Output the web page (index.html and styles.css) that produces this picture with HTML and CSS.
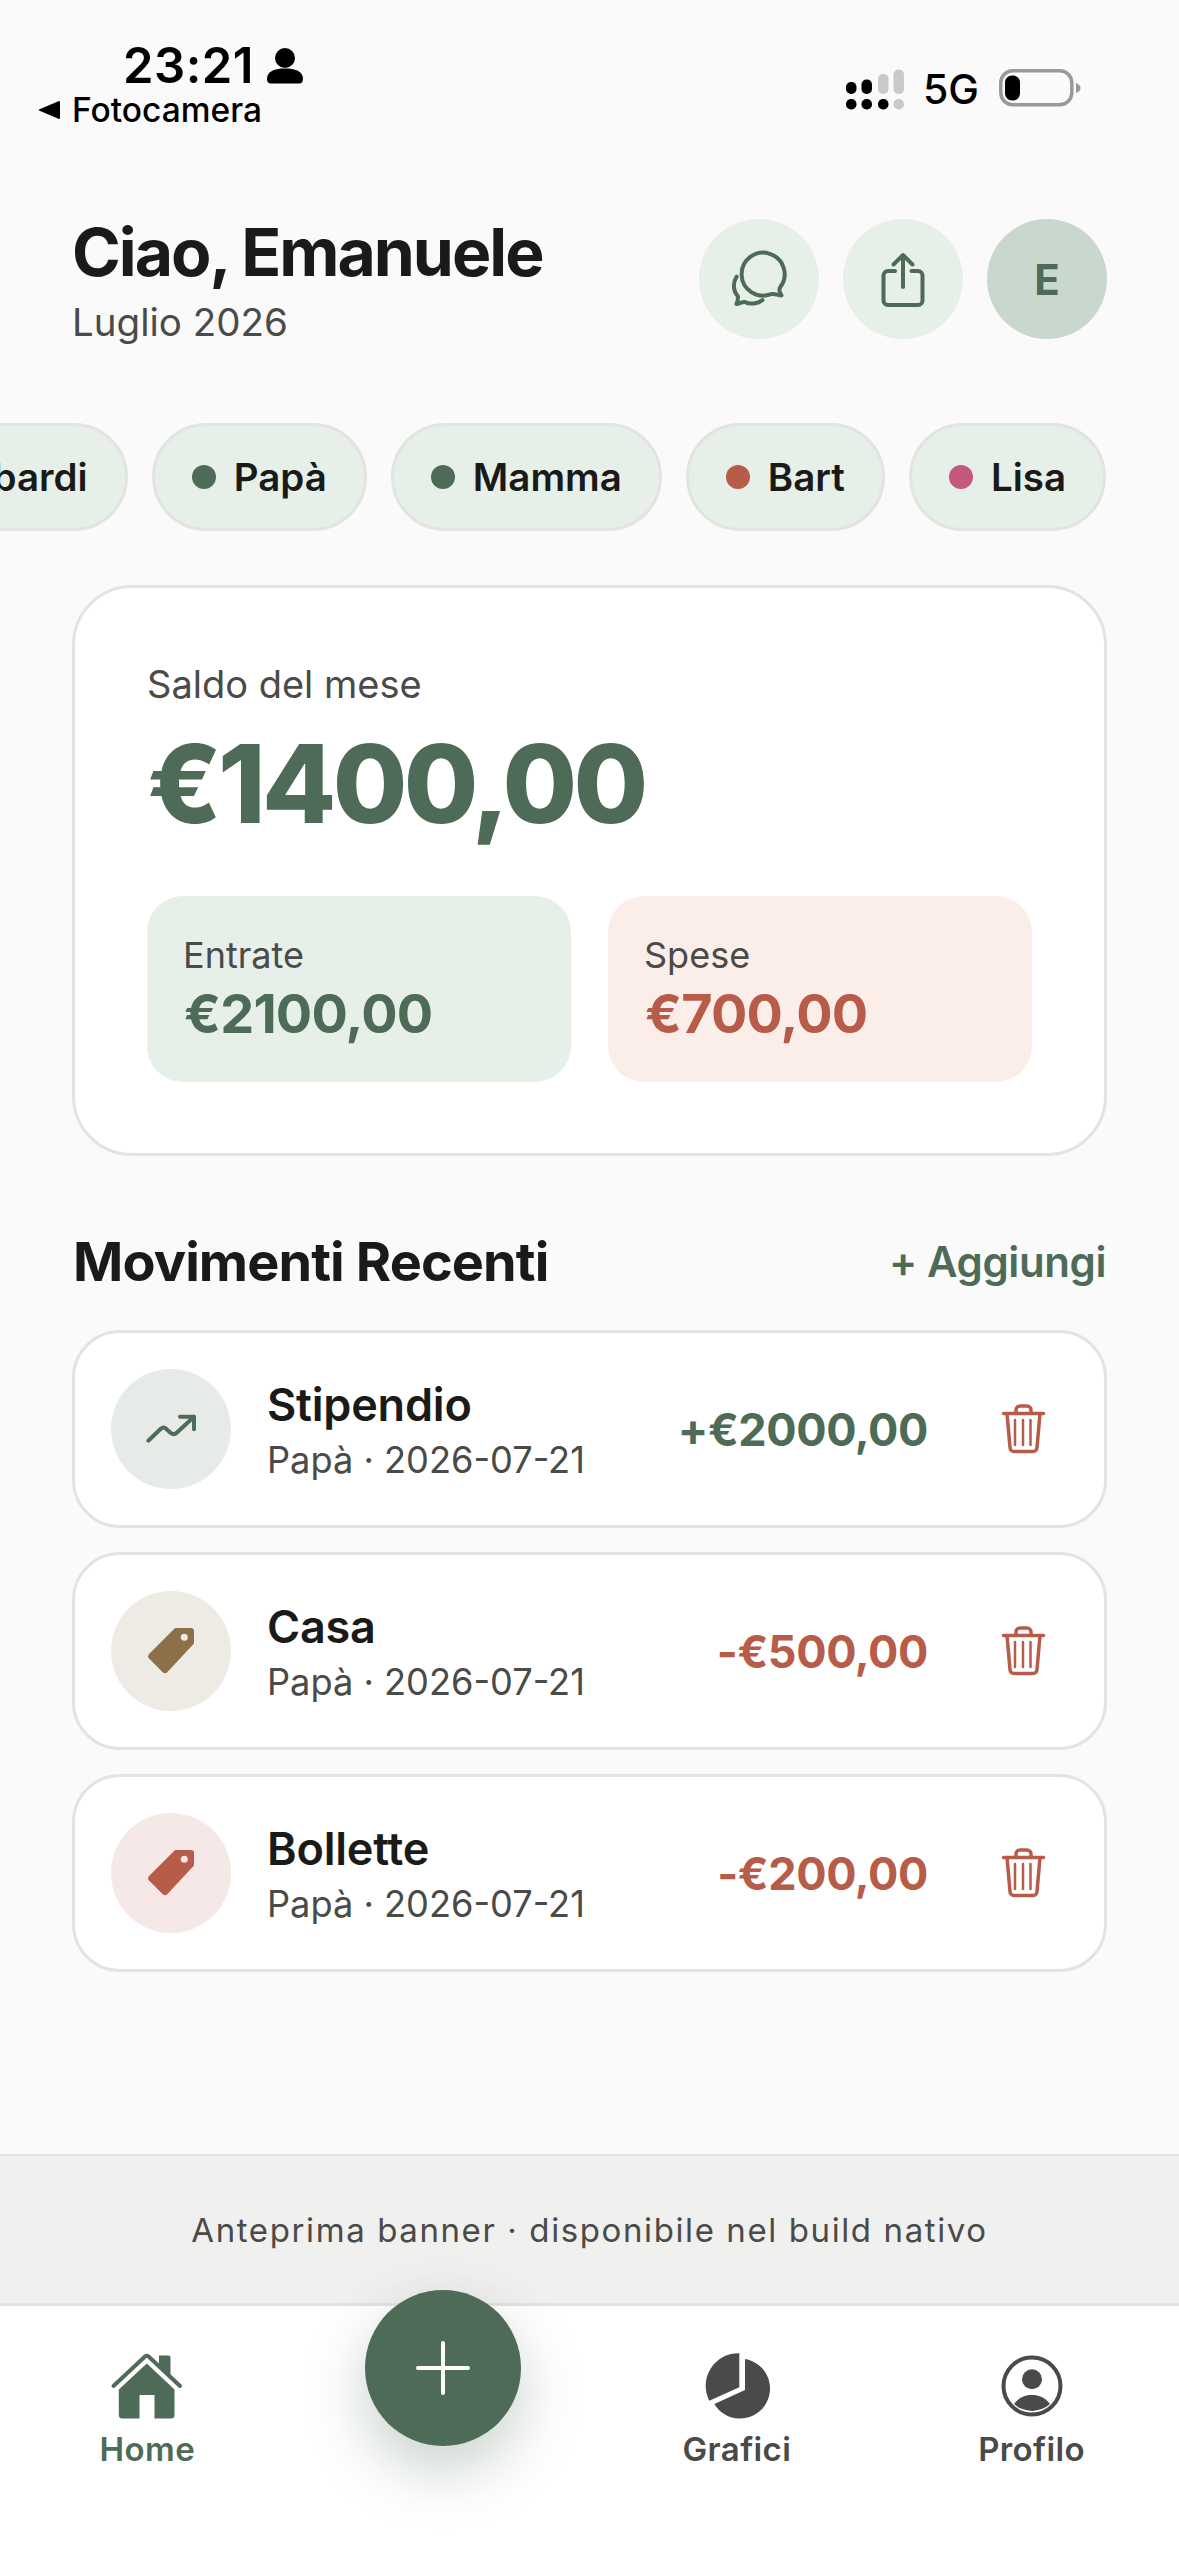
FILE: index.html
```html
<!DOCTYPE html>
<html lang="it">
<head>
<meta charset="utf-8">
<title>Ciao, Emanuele</title>
<link rel="stylesheet" href="styles.css">
</head>
<body>
<div class="app">
  <div class="status">
    <div class="status-left">
      <div class="time-row">
        <span class="time">23:21</span>
        <svg class="person" viewBox="0 0 36 36"><circle cx="18" cy="10" r="10"/><path d="M0 31C0 23 8 20.500 18 20.500S36 23 36 31C36 34 34.500 35.500 32 35.500H4C1.500 35.500 0 34 0 31Z"/></svg>
      </div>
      <div class="back-row">
        <svg class="back-arrow" viewBox="0 0 22 22"><path d="M21 2C21.500 2 22 2.500 22 3V19C22 19.500 21.500 20 21 20L1 11.500C0.500 11.300 0.500 10.700 1 10.500Z"/></svg>
        <span class="back-label">Fotocamera</span>
      </div>
    </div>
    <div class="status-right">
      <svg class="signal" viewBox="0 0 70 50">
        <rect class="on" x="6" y="37" width="10.500" height="10.500" rx="5"/><rect class="on" x="21.500" y="37" width="10.500" height="10.500" rx="5"/><rect class="on" x="38" y="37" width="10.500" height="10.500" rx="5"/><rect class="off" x="53.500" y="37" width="10.500" height="10.500" rx="5"/>
        <rect class="on" x="6" y="20" width="10.500" height="12" rx="5"/><rect class="on" x="21.500" y="17.500" width="10.500" height="14.500" rx="5"/><rect class="off" x="38" y="12" width="10.500" height="20" rx="5"/><rect class="off" x="53.500" y="7.500" width="10.500" height="24.500" rx="5"/>
      </svg>
      <span class="net">5G</span>
      <svg class="battery" viewBox="0 0 82 38"><rect class="batt-shell" x="1.800" y="1.800" width="71" height="34" rx="12"/><rect x="6" y="6.500" width="15" height="25" rx="7"/><path class="batt-nub" d="M77 14C80 15 81.500 17 81.500 19S80 23 77 24Z"/></svg>
    </div>
  </div>

  <header class="header">
    <div class="greeting">
      <h1 class="hello">Ciao, Emanuele</h1>
      <div class="month">Luglio 2026</div>
    </div>
    <div class="header-actions">
      <div class="round-btn">
        <svg class="icon-60 stroke-green" viewBox="0 0 60 60"><path d="M42 45.200A21.500 21.500 0 1 1 51 38.500C50 41 50.500 44 52.500 46.500C49 46.500 45 44 42 45.200Z"/><path d="M7.700 27.700C3.500 34 4 42 9 47.500C9 50 8.500 53 7.500 55C10.500 55 13 52.500 16 53C20 55.500 29 55 33.500 51"/></svg>
      </div>
      <div class="round-btn">
        <svg class="icon-60 stroke-green" viewBox="0 0 60 60"><path d="M22 22H15A4.500 4.500 0 0 0 10.500 26.500V51.500A4.500 4.500 0 0 0 15 56H45A4.500 4.500 0 0 0 49.500 51.500V26.500A4.500 4.500 0 0 0 45 22H38.500"/><path d="M30 38V6M20.500 15.500L30 6L39.500 15.500"/></svg>
      </div>
      <div class="round-btn avatar">E</div>
    </div>
  </header>

  <div class="chips">
    <div class="chip"><span class="dot dot-green"></span>Lombardi</div>
    <div class="chip"><span class="dot dot-green"></span>Papà</div>
    <div class="chip"><span class="dot dot-green"></span>Mamma</div>
    <div class="chip"><span class="dot dot-red"></span>Bart</div>
    <div class="chip"><span class="dot dot-pink"></span>Lisa</div>
  </div>

  <main class="content">
    <section class="balance">
      <div class="balance-label">Saldo del mese</div>
      <div class="balance-value">€1400,00</div>
      <div class="totals">
        <div class="total total-in">
          <div class="total-label">Entrate</div>
          <div class="total-value">€2100,00</div>
        </div>
        <div class="total total-out">
          <div class="total-label">Spese</div>
          <div class="total-value">€700,00</div>
        </div>
      </div>
    </section>

    <div class="section-head">
      <h2 class="section-title">Movimenti Recenti</h2>
      <span class="add-link">+ Aggiungi</span>
    </div>

    <div class="moves">
      <div class="move">
        <div class="move-icon tile-trend">
          <svg class="icon-60 stroke-green thin" viewBox="0 0 60 60"><path d="M7.300 41.700L20 29.500Q22.300 27.500 24.500 29.300L29.500 33.700Q33 36.500 36 33.500L53 17.700M39 17.700H53V30.300"/></svg>
        </div>
        <div class="move-text">
          <div class="move-title">Stipendio</div>
          <div class="move-sub">Papà · 2026-07-21</div>
        </div>
        <div class="move-amount plus">+€2000,00</div>
        <svg class="trash" viewBox="0 0 60 60"><path d="M10.500 14.500H50.500M23 14.500V11A4 4 0 0 1 27 7H34A4 4 0 0 1 38 11V14.500M14 14.500L17 48.500A4 4 0 0 0 21 52.500H40A4 4 0 0 0 44 48.500L47 14.500"/><path class="trash-bars" d="M22 21V46M30 21V46M37.500 21V46"/></svg>
      </div>
      <div class="move">
        <div class="move-icon tile-brown">
          <svg class="icon-60 tag tag-brown" viewBox="0 0 60 60"><path d="M34.500 8H50A2 2 0 0 1 52 10V22L25.500 50.500A2 2 0 0 1 22.500 50.500L8.500 36.500A2 2 0 0 1 8.500 34Z"/><circle class="hole" cx="43.300" cy="16.300" r="3.500"/></svg>
        </div>
        <div class="move-text">
          <div class="move-title">Casa</div>
          <div class="move-sub">Papà · 2026-07-21</div>
        </div>
        <div class="move-amount minus">-€500,00</div>
        <svg class="trash" viewBox="0 0 60 60"><path d="M10.500 14.500H50.500M23 14.500V11A4 4 0 0 1 27 7H34A4 4 0 0 1 38 11V14.500M14 14.500L17 48.500A4 4 0 0 0 21 52.500H40A4 4 0 0 0 44 48.500L47 14.500"/><path class="trash-bars" d="M22 21V46M30 21V46M37.500 21V46"/></svg>
      </div>
      <div class="move">
        <div class="move-icon tile-red">
          <svg class="icon-60 tag tag-red" viewBox="0 0 60 60"><path d="M34.500 8H50A2 2 0 0 1 52 10V22L25.500 50.500A2 2 0 0 1 22.500 50.500L8.500 36.500A2 2 0 0 1 8.500 34Z"/><circle class="hole" cx="43.300" cy="16.300" r="3.500"/></svg>
        </div>
        <div class="move-text">
          <div class="move-title">Bollette</div>
          <div class="move-sub">Papà · 2026-07-21</div>
        </div>
        <div class="move-amount minus">-€200,00</div>
        <svg class="trash" viewBox="0 0 60 60"><path d="M10.500 14.500H50.500M23 14.500V11A4 4 0 0 1 27 7H34A4 4 0 0 1 38 11V14.500M14 14.500L17 48.500A4 4 0 0 0 21 52.500H40A4 4 0 0 0 44 48.500L47 14.500"/><path class="trash-bars" d="M22 21V46M30 21V46M37.500 21V46"/></svg>
      </div>
    </div>
  </main>

  <div class="banner">Anteprima banner · disponibile nel build nativo</div>

  <nav class="nav">
    <div class="nav-item active">
      <svg class="nav-icon" viewBox="0 0 90 90"><path d="M57 14.500H66.500A2 2 0 0 1 68.500 16.500V36L57 25Z"/><path class="roof" d="M11.500 45L43 15.500Q44.800 14 46.600 15.500L78 45"/><path d="M44.800 22.500L72.500 48.500V74A3.500 3.500 0 0 1 69 77.500H52.500V54H37.500V77.500H20.300A3.500 3.500 0 0 1 16.800 74V48.500Z"/></svg>
      <span class="nav-label">Home</span>
    </div>
    <button class="fab" type="button" aria-label="Aggiungi">
      <svg viewBox="0 0 60 60"><path d="M30 5V55M5 30H55"/></svg>
    </button>
    <div class="nav-item">
      <svg class="nav-icon" viewBox="0 0 90 90"><path d="M47.300 12.300V46.300L17.300 59.700A32.500 32.500 0 0 1 47.300 12.300Z"/><path d="M53 18L53 49L22.300 63A30 30 0 1 0 53 18Z"/></svg>
      <span class="nav-label">Grafici</span>
    </div>
    <div class="nav-item">
      <svg class="nav-icon" viewBox="0 0 90 90"><circle class="ring" cx="45" cy="45" r="28.500"/><circle cx="45" cy="38.300" r="10"/><path d="M27 63C32 56.500 38 54 45 54C52 54 58 56.500 63 63A27 27 0 0 1 27 63Z"/></svg>
      <span class="nav-label">Profilo</span>
    </div>
  </nav>
</div>
</body>
</html>
```
FILE: styles.css
```css
* { box-sizing: border-box; }
html, body { margin: 0; padding: 0; }
body { background: #fafafa; font-family: Inter, "Liberation Sans", sans-serif; color: #1a1a18; }
.app { width: 1179px; height: 2556px; display: flex; flex-direction: column; overflow: hidden; }

/* status bar */
.status { display: flex; justify-content: space-between; padding: 42px 98px 0 38px; height: 130px; flex-shrink: 0; }
.time-row { display: flex; align-items: center; padding-left: 85px; height: 48px; }
.time { font-size: 49px; line-height: 48px; font-weight: 600; letter-spacing: 0.500px; color: #000; }
.person { width: 36px; height: 36px; margin-left: 13px; fill: #000; }
.back-row { display: flex; align-items: center; height: 40px; }
.back-arrow { width: 22px; height: 22px; fill: #000; margin-right: 12px; }
.back-label { font-size: 33.500px; line-height: 40px; font-weight: 500; color: #000; }
.status-right { display: flex; align-items: center; height: 94px; }
.signal { width: 70px; height: 50px; margin-top: -4px; }
.signal .on { fill: #000; }
.signal .off { fill: #c9c9c9; }
.net { font-size: 41px; line-height: 50px; font-weight: 500; color: #000; margin: 0 20px 0 13px; }
.battery { width: 82px; height: 38px; margin-top: -3px; fill: #000; }
.batt-shell { fill: none; stroke: #999; stroke-width: 3.500px; }
.batt-nub { fill: #999; }

/* header */
.header { display: flex; justify-content: space-between; align-items: flex-start; padding: 84px 72px 0 72px; flex-shrink: 0; }
.hello { margin: 0; font-size: 66px; line-height: 76px; font-weight: 700; letter-spacing: -2px; color: #1a1a18; }
.month { margin-top: 9px; font-size: 38.500px; line-height: 46px; font-weight: 400; color: #4a4a48; }
.header-actions { display: flex; gap: 24px; margin-top: 5px; }
.round-btn { width: 120px; height: 120px; border-radius: 50%; background: #e6efe8; display: flex; align-items: center; justify-content: center; }
.avatar { background: #c8d8ce; color: #4d6b57; font-size: 42px; font-weight: 700; }
.icon-60 { width: 60px; height: 60px; display: block; }
.stroke-green { fill: none; stroke: #4d6b57; stroke-width: 4px; stroke-linecap: round; stroke-linejoin: round; }
.stroke-green.thin { stroke-width: 4px; }

/* chips */
.chips { display: flex; justify-content: flex-end; gap: 24px; padding-right: 73px; margin-top: 78px; flex-shrink: 0; }
.chip { flex-shrink: 0; height: 108px; display: flex; align-items: center; gap: 18px; padding: 0 37px; border: 3px solid #e3e4df; border-radius: 54px; background: #e6efe8; font-size: 38.500px; font-weight: 600; color: #1a1a18; white-space: nowrap; }
.dot { width: 24px; height: 24px; border-radius: 50%; flex-shrink: 0; }
.dot-green { background: #4d6b57; }
.dot-red { background: #b85c4a; }
.dot-pink { background: #c4587e; }

/* balance card */
.content { flex: 1; padding: 54px 72px 0; }
.balance { background: #fff; border: 3px solid #e3e4df; border-radius: 60px; padding: 72px 72px 71px; }
.balance-label { font-size: 38px; line-height: 48px; color: #4a4a48; }
.balance-value { margin-top: 16px; font-size: 108px; line-height: 120px; font-weight: 800; letter-spacing: -3.700px; color: #4d6b57; }
.totals { margin-top: 52px; display: grid; grid-template-columns: 1fr 1fr; gap: 37px; }
.total { height: 186px; border-radius: 36px; padding: 0 36px; display: flex; flex-direction: column; justify-content: center; }
.total-in { background: #e6efe8; color: #4d6b57; }
.total-out { background: #fbeee9; color: #b85c4a; }
.total-label { font-size: 36px; line-height: 42px; color: #4a4a48; }
.total-value { margin: 8px 0 0 1px; font-size: 54px; line-height: 60px; font-weight: 700; letter-spacing: -0.800px; }

/* movements */
.section-head { display: flex; justify-content: space-between; align-items: center; margin-top: 70px; height: 72px; padding: 0 1px; }
.section-title { margin: 0; font-size: 54px; line-height: 72px; font-weight: 700; letter-spacing: -0.900px; color: #1a1a18; }
.add-link { font-size: 42px; line-height: 70px; font-weight: 600; letter-spacing: -0.400px; color: #4d6b57; }
.moves { margin-top: 32px; display: flex; flex-direction: column; gap: 24px; }
.move { height: 198px; display: flex; align-items: center; background: #fff; border: 3px solid #e3e4df; border-radius: 48px; padding: 0 51px 0 36px; }
.move-icon { width: 120px; height: 120px; border-radius: 50%; display: flex; align-items: center; justify-content: center; flex-shrink: 0; }
.tile-trend { background: #e6ebe8; }
.tile-brown { background: #eeebe5; }
.tile-red { background: #f5e8e6; }
.move-text { flex: 1; margin-left: 36px; }
.move-title { font-size: 45px; line-height: 60px; font-weight: 600; letter-spacing: -0.200px; color: #1a1a18; }
.move-sub { margin-top: 2px; font-size: 36.200px; line-height: 46px; color: #4a4a48; }
.move-amount { font-size: 45px; font-weight: 700; letter-spacing: -0.400px; }
.plus { color: #4d6b57; }
.minus { color: #b85c4a; }
.trash { width: 60px; height: 60px; margin-left: 65px; flex-shrink: 0; fill: none; stroke: #b85c4a; stroke-width: 3.500px; stroke-linecap: round; stroke-linejoin: round; }
.trash-bars { stroke-width: 2.500px; }
.tag path { stroke-width: 2px; stroke-linejoin: round; }
.tag-brown path { fill: #8b7048; stroke: #8b7048; }
.tag-red path { fill: #b85c4a; stroke: #b85c4a; }
.tag-brown .hole { fill: #eeebe5; }
.tag-red .hole { fill: #f5e8e6; }

/* banner */
.banner { height: 149px; flex-shrink: 0; background: #f0f0ee; border-top: 2px solid #e4e4e0; display: flex; align-items: center; justify-content: center; font-size: 33px; letter-spacing: 1.600px; color: #4a4a48; }

/* bottom nav */
.nav { height: 253px; flex-shrink: 0; position: relative; display: grid; grid-template-columns: repeat(4, 1fr); align-items: start; background: #fff; border-top: 3px solid #e4e4e0; padding-top: 35px; }
.nav-item { display: flex; flex-direction: column; align-items: center; color: #4a4a48; }
.nav-item.active { color: #4d6b57; }
.nav-icon { width: 90px; height: 90px; display: block; fill: currentColor; }
.roof { fill: none; stroke: currentColor; stroke-width: 4px; stroke-linecap: round; stroke-linejoin: round; }
.ring { fill: none; stroke: currentColor; stroke-width: 4px; }
.nav-label { font-size: 33px; line-height: 36px; font-weight: 600; letter-spacing: 0.400px; }
.fab { justify-self: center; width: 156px; height: 156px; margin: -51px 0 0 2px; padding: 0; border: 0; border-radius: 50%; background: #4d6b57; box-shadow: 0 24px 60px rgba(77, 107, 87, 0.3); display: flex; align-items: center; justify-content: center; }
.fab svg { width: 60px; height: 60px; fill: none; stroke: #fff; stroke-width: 4px; stroke-linecap: round; }
```
